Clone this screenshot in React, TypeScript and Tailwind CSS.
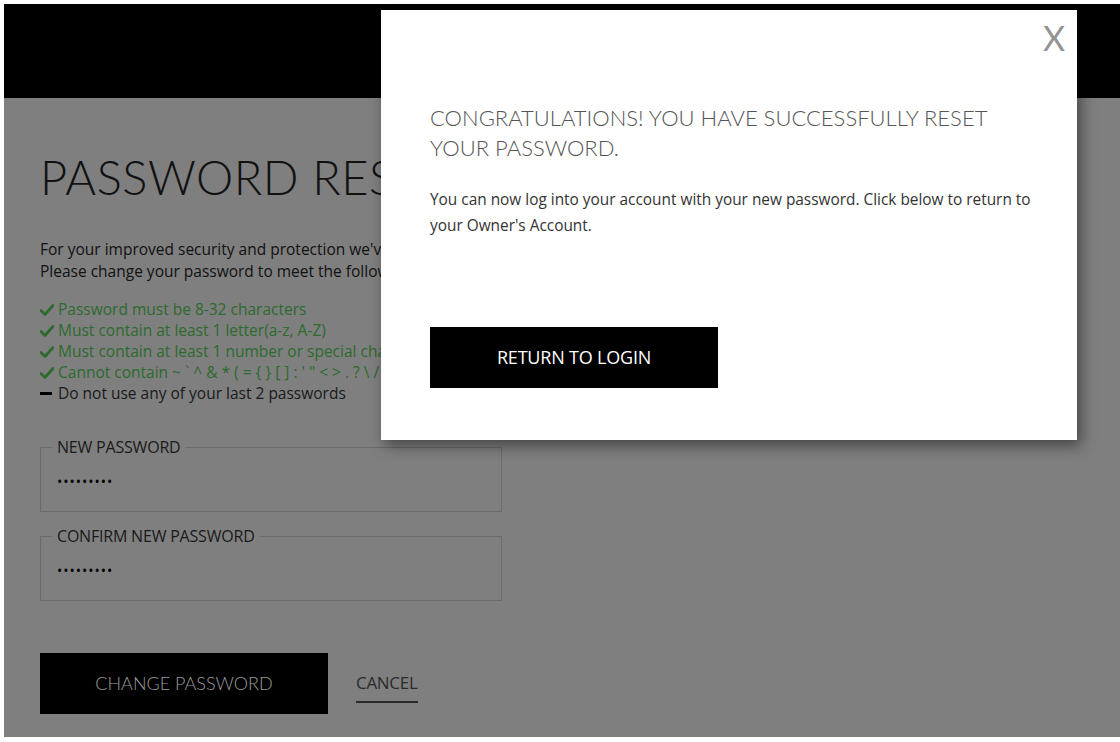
import React from "react";

const body = { fontFamily: "'Open Sans', 'Noto Sans', 'Liberation Sans', sans-serif" };
const thin = { fontFamily: "Lato, 'Noto Sans', 'Liberation Sans', sans-serif" };

function Check() {
  return (
    <span className="inline-flex w-[18px] shrink-0 items-center">
      <svg width="14" height="12" viewBox="0 0 14 12">
        <path d="M1 6.5 L5 10.5 L13 1.5" fill="none" stroke="#2d6a2d" strokeWidth="2.8" strokeLinecap="round" strokeLinejoin="round" />
      </svg>
    </span>
  );
}

function Field({ label }: { label: string }) {
  return (
    <fieldset className="border border-[#6b6b6b] w-[462px] h-[73px] pl-[11px] pr-4">
      <legend className="px-[5px] text-[16px] text-[#1a1a1a] leading-[16px] tracking-[-0.2px]" style={body}>
        {label}
      </legend>
      <div className="text-[14px] text-black tracking-[1px] leading-[20px] mt-[17px] pl-[5px]">•••••••••</div>
    </fieldset>
  );
}

export default function App() {
  const checks = [
    "Password must be 8-32 characters",
    "Must contain at least 1 letter(a-z, A-Z)",
    "Must contain at least 1 number or special character",
    "Cannot contain ~ ` ^ & * ( = { } [ ] : ' \" < > . ? \\ / |",
  ];
  return (
    <div className="w-[1120px] h-[742px] bg-white pt-1 pl-1 pb-[5px] overflow-hidden">
      <div className="relative w-full h-full bg-[#7f7f7f]">
        <div className="h-[94px] bg-black" />
        <div className="pl-9 pt-[54px]" style={body}>
          <h1 className="text-[47px] leading-[50px] font-light text-[#111] tracking-[0.5px]" style={thin}>
            PASSWORD RESET
          </h1>
          <div className="mt-[36px] text-[15.5px] leading-[22px] text-[#111]">
            <p className="whitespace-nowrap">For your improved security and protection we've updated our password requirements.</p>
            <p className="whitespace-nowrap">Please change your password to meet the following requirements:</p>
          </div>
          <ul className="mt-[17px] text-[15.5px] leading-[21px]">
            {checks.map((c) => (
              <li key={c} className="flex items-center text-[#2d6a2d] whitespace-nowrap">
                <Check />
                <span>{c}</span>
              </li>
            ))}
            <li className="flex items-center text-[#1a1a1a]">
              <span className="inline-flex w-[18px] items-center">
                <span className="block w-[12px] h-[3px] bg-black" />
              </span>
              <span>Do not use any of your last 2 passwords</span>
            </li>
          </ul>
          <div className="mt-[35px] flex flex-col gap-[16px]">
            <Field label="NEW PASSWORD" />
            <Field label="CONFIRM NEW PASSWORD" />
          </div>
          <div className="mt-[52px] flex items-center">
            <button className="w-[288px] h-[61px] bg-black text-[#9c9c9c] text-[18px] font-light" style={thin}>
              CHANGE PASSWORD
            </button>
            <span className="ml-[28px] text-[17px] text-[#2a2a2a] border-b-2 border-[#2a2a2a] pb-[6px] mt-[6px] tracking-[-0.3px]">
              CANCEL
            </span>
          </div>
        </div>

        <div className="absolute left-[377px] top-[6px] w-[696px] h-[430px] bg-white shadow-[4px_6px_14px_rgba(0,0,0,0.45)] pl-[49px] pt-[93px]">
          <span className="absolute right-[12px] top-[8px] text-[34px] leading-[40px] text-[#939393]" style={thin}>
            X
          </span>
          <h2 className="text-[22px] leading-[30px] text-[#555] font-light pr-[60px]" style={thin}>
            CONGRATULATIONS! YOU HAVE SUCCESSFULLY RESET YOUR PASSWORD.
          </h2>
          <p className="mt-[24px] text-[15.4px] leading-[26px] text-[#333] pr-[40px]" style={body}>
            You can now log into your account with your new password. Click below to return to your Owner's Account.
          </p>
          <button className="mt-[88px] w-[288px] h-[61px] bg-black text-white text-[18px] tracking-[-0.2px]" style={body}>
            RETURN TO LOGIN
          </button>
        </div>
      </div>
    </div>
  );
}
